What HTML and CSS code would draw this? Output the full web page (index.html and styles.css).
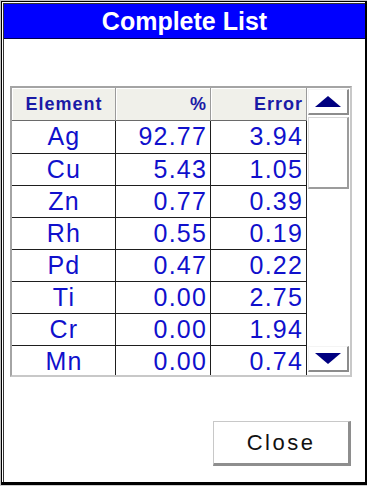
FILE: index.html
```html
<!DOCTYPE html>
<html>
<head>
<meta charset="utf-8">
<link rel="stylesheet" href="styles.css">
</head>
<body>
<div class="window">
  <div class="frame">
    <div class="inner">
      <div class="titlebar">Complete List</div>
      <div class="content">
        <div class="list">
          <div class="grid">
            <div class="hcell center">Element</div>
            <div class="hcell right">%</div>
            <div class="hcell right">Error</div>

            <div class="cell center">Ag</div><div class="cell right">92.77</div><div class="cell right">3.94</div>
            <div class="cell center">Cu</div><div class="cell right">5.43</div><div class="cell right">1.05</div>
            <div class="cell center">Zn</div><div class="cell right">0.77</div><div class="cell right">0.39</div>
            <div class="cell center">Rh</div><div class="cell right">0.55</div><div class="cell right">0.19</div>
            <div class="cell center">Pd</div><div class="cell right">0.47</div><div class="cell right">0.22</div>
            <div class="cell center">Ti</div><div class="cell right">0.00</div><div class="cell right">2.75</div>
            <div class="cell center">Cr</div><div class="cell right">0.00</div><div class="cell right">1.94</div>
            <div class="cell center">Mn</div><div class="cell right">0.00</div><div class="cell right">0.74</div>
          </div>
          <div class="scrollbar">
            <div class="sbtn up">
              <svg width="26" height="11" viewBox="0 0 26 11"><polygon points="13,0 26,11 0,11" fill="#000080"/></svg>
            </div>
            <div class="thumb"></div>
            <div class="track"></div>
            <div class="sbtn down">
              <svg width="26" height="11" viewBox="0 0 26 11"><polygon points="0,0 26,0 13,11" fill="#000080"/></svg>
            </div>
          </div>
        </div>
        <div class="actions">
          <div class="close-btn">Close</div>
        </div>
      </div>
    </div>
  </div>
</div>
</body>
</html>
```

FILE: styles.css
```css
html, body {
  margin: 0;
  padding: 0;
  background: #ffffff;
}

.window {
  box-sizing: border-box;
  width: 367px;
  height: 486px;
  border-left: 1px solid #c4c4c4;
  border-top: 1px solid #c4c4c4;
  border-bottom: 1px solid #cfcfcf;
}

.frame {
  box-sizing: border-box;
  height: 100%;
  border: 1px solid #000;
  border-right-width: 2px;
  border-bottom-width: 3px;
  padding: 1px 0 0 1px;
}

.inner {
  box-sizing: border-box;
  height: 100%;
  border-left: 1px solid #333;
  border-top: 1px solid #333;
  display: flex;
  flex-direction: column;
}

.titlebar {
  height: 34px;
  line-height: 34px;
  background: #0000ff;
  border-bottom: 1px solid #000050;
  color: #ffffff;
  text-align: center;
  font-family: "Liberation Sans", Arial, sans-serif;
  font-weight: bold;
  font-size: 25px;
}

.content {
  flex: 1;
  display: flex;
  flex-direction: column;
  padding: 47px 0 0 6px;
}

.list {
  box-sizing: border-box;
  width: 342px;
  height: 291px;
  border: 2px solid;
  border-color: #a4a4a4 #c8c8c8 #c8c8c8 #a4a4a4;
  display: flex;
  overflow: hidden;
}

.grid {
  display: grid;
  grid-template-columns: 104px 95px 96px;
  grid-template-rows: 33px 33px repeat(7, 32px);
  font-family: "Liberation Sans", Arial, sans-serif;
}

.hcell {
  box-sizing: border-box;
  background: #f0f0ea;
  border-right: 1px solid #9a9a9a;
  border-bottom: 1px solid #6a6a6a;
  box-shadow: inset 1px 1px 0 #ffffff;
  color: #1a1aa6;
  font-weight: bold;
  font-size: 18px;
  letter-spacing: 1px;
  line-height: 32px;
}

.cell {
  box-sizing: border-box;
  background: #ffffff;
  border-right: 1px solid #1e1e1e;
  border-bottom: 1px solid #1e1e1e;
  color: #1010cc;
  font-size: 25px;
  letter-spacing: 1.2px;
  line-height: 31px;
}

.center {
  text-align: center;
  padding-left: 1px;
}

.right {
  text-align: right;
  padding-right: 3px;
}

.scrollbar {
  width: 43px;
  background: #ffffff;
  display: flex;
  flex-direction: column;
  padding: 1px 1px 3px 1px;
  box-sizing: border-box;
}

.sbtn {
  box-sizing: border-box;
  height: 26px;
  background: #ffffff;
  border: 1px solid;
  border-width: 1px 2px 2px 1px;
  border-color: #f4f4f4 #8c8c8c #8c8c8c #f4f4f4;
  display: flex;
  align-items: center;
  justify-content: center;
}

.thumb {
  box-sizing: border-box;
  margin-top: 2px;
  height: 72px;
  background: #ffffff;
  border: 1px solid;
  border-width: 1px 2px 2px 1px;
  border-color: #d8d8d8 #9c9c9c #9c9c9c #d8d8d8;
}

.track {
  flex: 1;
}

.actions {
  display: flex;
  justify-content: flex-end;
  padding: 44px 14px 0 0;
}

.close-btn {
  box-sizing: border-box;
  width: 138px;
  height: 45px;
  background: #ffffff;
  border-style: solid;
  border-width: 1px 3px 3px 1px;
  border-color: #c8c8c8 #8e8e8e #8e8e8e #c8c8c8;
  display: flex;
  align-items: center;
  justify-content: center;
  font-family: "Liberation Sans", Arial, sans-serif;
  font-size: 22px;
  letter-spacing: 2.5px;
  color: #111111;
}
```
